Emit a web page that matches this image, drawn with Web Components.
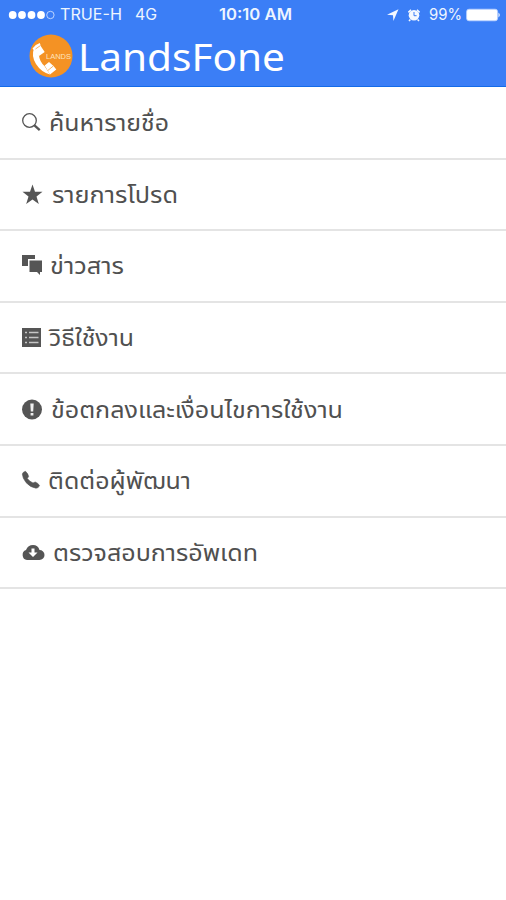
<!DOCTYPE html>
<html lang="th"><head><meta charset="utf-8"><title>LandsFone</title>
<style>body{margin:0;background:#fff;height:900px;overflow:hidden}</style></head><body>
<phone-app></phone-app>
<script>
class FitText extends HTMLElement{
  connectedCallback(){
    const r=this.attachShadow({mode:'open'});
    r.innerHTML='<style>:host{display:block;flex:none;white-space:nowrap}span{display:inline-block;transform-origin:0 50%}</style><span><slot></slot></span>';
    const w=+this.getAttribute('width'),s=r.querySelector('span');
    this.style.width=w+'px';
    s.style.transform='scaleX('+(w/s.getBoundingClientRect().width)+')';
  }
}
class StatusBar extends HTMLElement{
  connectedCallback(){
    this.attachShadow({mode:'open'}).innerHTML=`<style>
:host{display:grid;box-sizing:border-box;padding-top:1px;grid-template-columns:219px 167px 1fr;height:29px;align-items:center;color:#eef5ff;font:15.5px/28px Inter,"Liberation Sans",sans-serif}
div{display:flex;align-items:center}svg{display:block;flex:none;margin-top:-1px}
.l{padding-left:8px}.l svg{margin-right:5px}.l fit-text+fit-text{margin-left:13px}.c{font-weight:600}</style>
<div class="l"><svg width="47" height="10" fill="#fff"><circle cx="4.7" cy="5" r="3.9"/><circle cx="14" cy="5" r="3.9"/><circle cx="23.5" cy="5" r="3.9"/><circle cx="33" cy="5" r="3.9"/><circle cx="42.4" cy="5" r="3.7" fill="none" stroke="#c9dcff" stroke-width=".9"/></svg><fit-text width="62">TRUE-H</fit-text><fit-text width="22">4G</fit-text></div>
<div class="c"><fit-text width="73">10:10 AM</fit-text></div>
<div><svg width="43" height="18" fill="#f4f8ff"><path d="M1 8.8 12.5 3.2 7.4 15 7 9.2Z"/><circle cx="28" cy="9.3" r="5.3"/><path d="M22.4 6.4 25 3.8M33.6 6.4 31 3.8M24.4 13.4 23 15M31.6 13.4 33 15" stroke="#f4f8ff" stroke-width="1.5"/><path d="M28 6V9.7H30.6" fill="none" stroke="#3b7cf5" stroke-width="1"/></svg><fit-text width="33">99%</fit-text><svg width="38" height="16" style="margin-left:4px"><rect x=".6" y="2.2" width="31" height="11.6" rx="2.4" fill="#fff" stroke="#b9d1ff" stroke-width=".8"/><path d="M32.5 5.5q2.5 2.5 0 5Z" fill="#fff"/></svg></div>`;
  }
}
class AppHeader extends HTMLElement{
  connectedCallback(){
    this.attachShadow({mode:'open'}).innerHTML=`<style>
:host{display:block;box-sizing:border-box;height:87px;background:#3b7ef6;border-bottom:1.5px solid #146be8}
.t{display:flex;align-items:center;height:54px;padding-left:29px;color:#fff;font:38px/54px "Noto Sans",sans-serif}
svg{display:block;margin-right:5px}</style><status-bar></status-bar>
<div class="t"><svg width="44" height="44" viewBox="0 0 44 44"><circle cx="22" cy="22" r="21.5" fill="#f49224"/><path d="M5 14.500Q2 22 7 30T21 40.500L15.500 32Q10.500 27.500 10 21.500Z" fill="#fff"/><path d="M3.500 14.500Q6 10.500 10.800 9L12 12.500 15.700 18 10 22ZM15.700 31.500 20 28 24.500 32 27.300 35.500 21 40.500Z" fill="#fff"/><path d="m6.500 15 5-3.500M18.800 36.500l5.500-4.500" stroke="#f49224" stroke-width=".7"/><text x="17" y="24.500" fill="#ffe2bd" font-family="Liberation Sans" font-size="7" textLength="25" lengthAdjust="spacingAndGlyphs">LANDS</text></svg><fit-text width="207">LandsFone</fit-text></div>`;
  }
}
class MenuRow extends HTMLElement{
  connectedCallback(){
    this.attachShadow({mode:'open'}).innerHTML=`<style>
:host{display:flex;align-items:center;box-sizing:border-box;height:71.6px;padding-top:1px;border-bottom:2px solid #e4e4e4;padding-left:21px;color:#505050;font:22.5px/36px "Noto Sans Thai","Noto Sans",sans-serif}
::slotted(svg){display:block;flex:none;fill:#555}
::slotted(fit-text){padding-top:2px}</style><slot></slot>`;
  }
}
class PhoneApp extends HTMLElement{
  connectedCallback(){
    const rows=[
[120,7,'ค้นหารายชื่อ','<g fill="none" stroke="#555"><circle cx="8.5" cy="8.5" r="6.8" stroke-width="1.3"/><path d="m13.2 13.2 5.5 5" stroke-width="2.3"/></g>'],
[126,10,'รายการโปรด','<path d="m11.500 .5 2.500 7.300H21.500l-6 4.600 2.300 7.500L11.500 15.400 5.200 19.900 7.500 12.400 1.500 7.800h7.500Z"/>'],
[74,8,'ข่าวสาร','<path d="M1 0h13v4H7v7H1Z"/><path d="M8.500 5.500H21V17h-2v3l-3-3H8.500Z"/>'],
[85,7,'วิธีใช้งาน','<path d="M1 1h19v19H1Z"/><path d="M4 5.500h2M8 5.500h9.500M4 10.500h2M8 10.500h9.500M4 15.500h2M8 15.500h9.500" stroke="#c5c5c5" stroke-width="1.500"/>'],
[292,8.500,'ข้อตกลงและเงื่อนไขการใช้งาน','<circle cx="11" cy="10.500" r="10"/><path d="M9.300 4.500h3.400l-.5 8H9.800ZM9.600 14h2.800v2.500H9.600Z" fill="#eee"/>'],
[143,6,'ติดต่อผู้พัฒนา','<path d="M1.300 4Q2 1.800 4.500 1.300Q7 3.500 7.600 6.500L6.300 8.500Q8.500 11.500 12 13L14.200 12Q17.200 13 18.500 15.600Q17.500 18.200 15 18.200Q9.500 17.500 5 12.500Q1.500 8 1.300 4Z" stroke="#555" stroke-width=".6"/>'],
[205,9,'ตรวจสอบการอัพเดท','<path d="M6 18A5.200 5.200 0 0 1 5 8Q7 3 12 3T18.500 8A5 5 0 0 1 18.500 18Z"/><path d="M10.500 6.500h3v4h3L12 15l-4.500-4.500h3Z" fill="#fff"/>']];
    this.attachShadow({mode:'open'}).innerHTML='<style>:host{display:block;background:#fff;height:900px}menu-row:first-of-type{height:72.600px}</style><app-header></app-header>'+rows.map(([w,g,t,i],k)=>`<menu-row><svg width="${k===6?24:22}" height="22">${i}</svg><fit-text width="${w}" style="margin-left:${g-1}px">${t}</fit-text></menu-row>`).join('');
  }
}
customElements.define('fit-text',FitText);customElements.define('status-bar',StatusBar);customElements.define('app-header',AppHeader);customElements.define('menu-row',MenuRow);customElements.define('phone-app',PhoneApp);
</script></body></html>
